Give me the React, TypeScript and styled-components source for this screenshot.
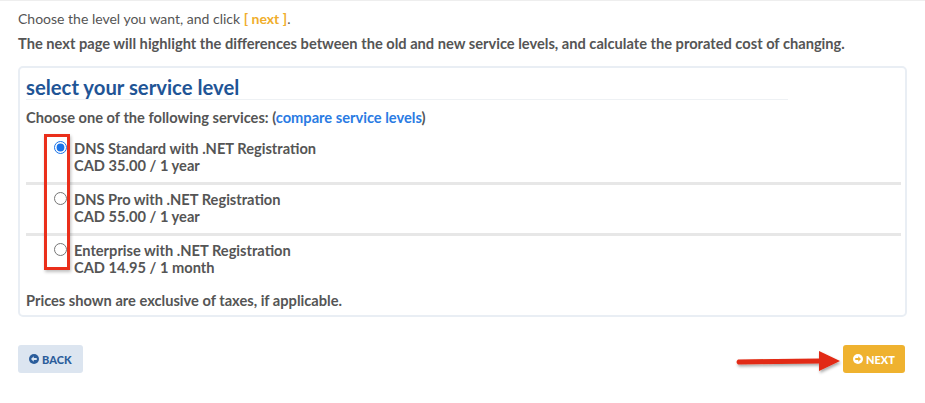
import React, { useState } from "react";
import styled, { createGlobalStyle } from "styled-components";

const GlobalStyle = createGlobalStyle`
  body {
    margin: 0;
    background: #fff;
    font-family: Lato, "Open Sans", sans-serif;
    color: #555;
  }
`;

const Page = styled.div`
  border-top: 1px solid #eee;
  padding: 8px 18px 20px;
`;

const Intro = styled.p`
  margin: 0;
  font-size: 14px;
  line-height: 20px;
`;

const Lead = styled.p`
  margin: 5px 0 0;
  font-size: 14.65px;
  line-height: 20px;
  font-weight: 700;
`;

const Accent = styled.span`
  color: #f0ae2b;
  font-weight: 700;
`;

const Panel = styled.section`
  margin-top: 12px;
  border: 2px solid #e9eef4;
  border-radius: 5px;
  padding: 8px 4px 6px 6px;
`;

const Title = styled.h2`
  margin: 0;
  width: 762px;
  font-size: 20.3px;
  line-height: 23px;
  font-weight: 700;
  color: #1f5596;
  border-bottom: 1px solid #eef1f4;
`;

const Subtitle = styled.p`
  margin: 9px 0 0;
  font-size: 14.65px;
  line-height: 17px;
  font-weight: 700;
`;

const Link = styled.a`
  color: #2a7be3;
  text-decoration: none;
`;

const Options = styled.div`
  position: relative;
  margin-top: 8px;
`;

const Option = styled.label<{ $last?: boolean }>`
  display: flex;
  align-items: flex-start;
  gap: 7px;
  padding: 6px 0 8px 28px;
  border-bottom: ${(p) => (p.$last ? "none" : "3px solid #e7e7e7")};
  font-size: 14.65px;
  line-height: 17px;
  font-weight: 700;
  cursor: pointer;
`;

const Radio = styled.input`
  width: 13px;
  height: 13px;
  margin: 1px 0 0;
  accent-color: #1a73e8;
`;

const Highlight = styled.div`
  position: absolute;
  left: 18px;
  top: 0;
  width: 20px;
  height: 130px;
  border: 3px solid #ea2f1b;
  box-shadow: 1px 2px 3px rgba(0, 0, 0, 0.25);
  pointer-events: none;
`;

const Note = styled.p`
  margin: 8px 0 0;
  font-size: 14.65px;
  line-height: 17px;
  font-weight: 700;
`;

const Actions = styled.div`
  position: relative;
  display: flex;
  justify-content: space-between;
  margin-top: 28px;
`;

const Button = styled.button<{ $primary?: boolean }>`
  display: inline-flex;
  align-items: center;
  gap: 3px;
  height: 28px;
  padding: 0 ${(p) => (p.$primary ? "10px" : "11px")};
  margin-right: ${(p) => (p.$primary ? "2px" : "0")};
  border: none;
  border-radius: 3px;
  background: ${(p) => (p.$primary ? "#efb22f" : "#dce5f0")};
  color: ${(p) => (p.$primary ? "#fff" : "#2b5d9b")};
  font-family: Lato, sans-serif;
  font-size: 11px;
  font-weight: 900;
  text-transform: uppercase;
  cursor: pointer;
`;

const Pointer = styled.svg`
  position: absolute;
  right: 66px;
  top: 4px;
  overflow: visible;
`;

const CircleArrow = ({ dir, bg }: { dir: "left" | "right"; bg: string }) => (
  <svg width="10" height="10" viewBox="0 0 20 20">
    <circle cx="10" cy="10" r="10" fill="currentColor" />
    <g transform={dir === "left" ? "" : "rotate(180 10 10)"}>
      <path d="M4 10 L9.5 4.5 L9.5 7.8 L15.5 7.8 L15.5 12.2 L9.5 12.2 L9.5 15.5 Z" fill={bg} />
    </g>
  </svg>
);

const plans = [
  { name: "DNS Standard with .NET Registration", price: "CAD 35.00 / 1 year" },
  { name: "DNS Pro with .NET Registration", price: "CAD 55.00 / 1 year" },
  { name: "Enterprise with .NET Registration", price: "CAD 14.95 / 1 month" },
];

export default function App() {
  const [selected, setSelected] = useState(0);

  return (
    <Page>
      <GlobalStyle />
      <Intro>
        Choose the level you want, and click <Accent>[ next ]</Accent>.
      </Intro>
      <Lead>
        The next page will highlight the differences between the old and new service levels, and
        calculate the prorated cost of changing.
      </Lead>

      <Panel>
        <Title>select your service level</Title>
        <Subtitle>
          Choose one of the following services: (<Link href="#">compare service levels</Link>)
        </Subtitle>
        <Options>
          {plans.map((plan, i) => (
            <Option key={plan.name} $last={i === plans.length - 1}>
              <Radio
                type="radio"
                name="level"
                checked={selected === i}
                onChange={() => setSelected(i)}
              />
              <div>
                {plan.name}
                <br />
                {plan.price}
              </div>
            </Option>
          ))}
          <Highlight />
        </Options>
        <Note>Prices shown are exclusive of taxes, if applicable.</Note>
      </Panel>

      <Actions>
        <Button>
          <CircleArrow dir="left" bg="#dce5f0" />
          Back
        </Button>
        <Pointer width="106" height="24" viewBox="0 0 106 24">
          <defs>
            <filter id="sh" x="-10%" y="-40%" width="120%" height="200%">
              <feDropShadow dx="1" dy="2" stdDeviation="1.5" floodOpacity="0.35" />
            </filter>
          </defs>
          <path
            d="M3 10.5 L84 9.5 L84 2 L105 12 L84 22 L84 14.5 L3 15.5 Q0 13 3 10.5 Z"
            fill="#e22a12"
            filter="url(#sh)"
          />
        </Pointer>
        <Button $primary>
          <CircleArrow dir="right" bg="#efb22f" />
          Next
        </Button>
      </Actions>
    </Page>
  );
}
